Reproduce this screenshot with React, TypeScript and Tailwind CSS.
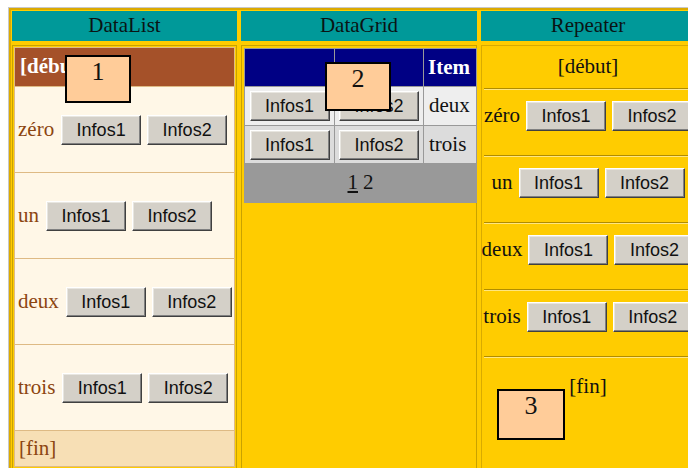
import React from 'react';

const items = ['zéro', 'un', 'deux', 'trois'];

const Btn: React.FC<{ label: string }> = ({ label }) => (
  <button className="w-[80px] h-[30px] shrink-0 bg-[#d4d0c8] border border-t-white border-l-white border-r-[#404040] border-b-[#404040] shadow-[inset_-1px_-1px_#808080,inset_1px_1px_#e8e6e0] font-['Liberation_Sans',Arial,sans-serif] text-[18px] leading-none text-[#111]">
    {label}
  </button>
);

const Note: React.FC<{ n: string; className: string }> = ({ n, className }) => (
  <div className={`absolute border-2 border-black bg-[#ffcc99] text-center text-[26px] leading-[30px] text-[#111] ${className}`}>
    {n}
  </div>
);

const DataList = () => (
  <div className="border border-[#deba84] bg-[#fff7e7] text-[#8c4510]">
    <div className="h-[38px] bg-[#a55129] text-white font-bold flex items-center px-[5px]">[début]</div>
    {items.map((it) => (
      <div key={it} className="h-[86px] border-t border-[#deba84] flex items-center gap-[6px] px-[3px]">
        <span className="mr-px">{it}</span>
        <Btn label="Infos1" />
        <Btn label="Infos2" />
      </div>
    ))}
    <div className="h-[36px] border-t border-[#deba84] bg-[#f7dfb5] flex items-center px-[4px]">[fin]</div>
  </div>
);

const DataGrid = () => (
  <div className="w-max bg-[#999999] p-px grid grid-cols-[89px_88px_52px] gap-px">
    <div className="h-[37px] bg-[#000084]" />
    <div className="h-[37px] bg-[#000084]" />
    <div className="h-[37px] bg-[#000084] text-white font-bold flex items-center px-[4px]">Item</div>
    {['deux', 'trois'].map((it, i) => (
      <React.Fragment key={it}>
        <div className={`${i === 0 ? 'h-[38px] bg-[#eeeeee]' : 'h-[37px] bg-[#dcdcdc]'} flex items-center justify-center`}>
          <Btn label="Infos1" />
        </div>
        <div className={`${i === 0 ? 'bg-[#eeeeee]' : 'bg-[#dcdcdc]'} flex items-center justify-center`}>
          <Btn label="Infos2" />
        </div>
        <div className={`${i === 0 ? 'bg-[#eeeeee]' : 'bg-[#dcdcdc]'} flex items-center px-[5px] text-[#111]`}>{it}</div>
      </React.Fragment>
    ))}
    <div className="col-span-3 h-[38px] flex items-center justify-center gap-[5px] text-[#111]">
      <span className="underline">1</span>
      <span>2</span>
    </div>
  </div>
);

const Rule = () => <div className="mx-[2px] border-t border-b border-t-[#b08c00] border-b-[#ffe680]" />;

const Repeater = () => (
  <div className="text-[#111]">
    <div className="h-[42px] flex items-center justify-center">[début]</div>
    {items.map((it) => (
      <React.Fragment key={it}>
        <Rule />
        <div className="h-[65px] pt-[11px] flex justify-center">
          <div className="h-[30px] flex items-center gap-[6px]">
            <span>{it}</span>
            <Btn label="Infos1" />
            <Btn label="Infos2" />
          </div>
        </div>
      </React.Fragment>
    ))}
    <Rule />
    <div className="pt-[16px] text-center leading-[24px]">[fin]</div>
  </div>
);

export default function App() {
  return (
    <div className="relative w-[688px] h-[468px] overflow-hidden bg-white font-['Liberation_Serif','Times_New_Roman',serif] text-[21px]">
      <div className="ml-[8px] mt-[7px] w-max border-l border-t border-[#c8c8c8]">
        <div className="border-l-2 border-t-2 border-[#dcaa00] bg-[#ffcc00] p-px grid grid-cols-[225px_236px_214px] grid-rows-[30px_auto] gap-[4px]">
          {['DataList', 'DataGrid', 'Repeater'].map((h) => (
            <div key={h} className="bg-[#009999] flex items-center justify-center text-[#0a1414]">
              {h}
            </div>
          ))}
          <div className="border border-[#c9a200] p-px h-[440px]">
            <DataList />
          </div>
          <div className="border border-[#c9a200] pt-[2px] pl-[2px]">
            <DataGrid />
          </div>
          <div className="border border-[#d9ab00]">
            <Repeater />
          </div>
        </div>
      </div>
      <Note n="1" className="left-[65px] top-[55px] w-[66px] h-[48px]" />
      <Note n="2" className="left-[325px] top-[62px] w-[66px] h-[49px]" />
      <Note n="3" className="left-[497px] top-[389px] w-[68px] h-[51px]" />
    </div>
  );
}
